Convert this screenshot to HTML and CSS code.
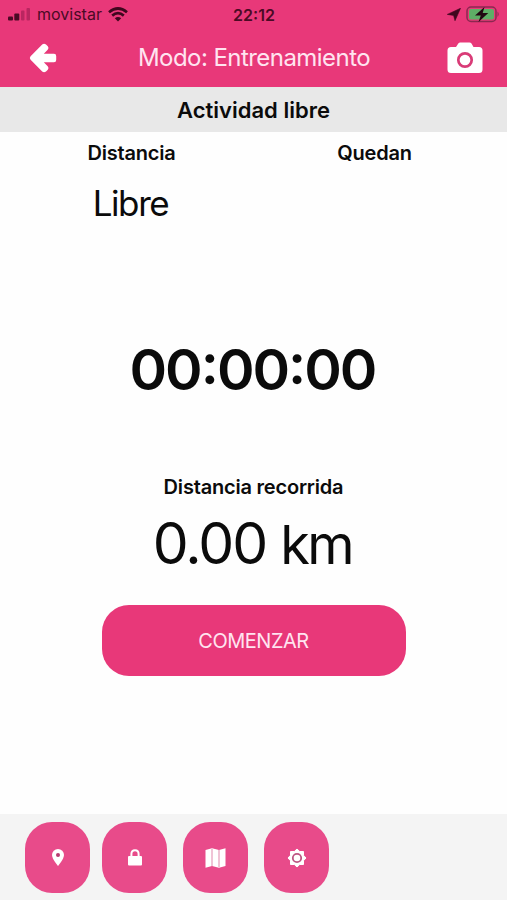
FILE: index.html
```html
<!DOCTYPE html>
<html lang="es">
<head>
  <meta charset="UTF-8" />
  <meta name="viewport" content="width=device-width, initial-scale=1" />
  <title>Modo: Entrenamiento</title>
  <link rel="stylesheet" href="styles.css">
</head>
<body>
  <div class="app">
    <div class="status-bar">
      <div class="carrier">
        <svg width="23" height="13" viewBox="0 0 23 13">
          <rect x="0" y="8.5" width="5" height="4" rx="1" fill="#4b0a25" />
          <rect x="6.3" y="5.5" width="5" height="7" rx="1" fill="#4b0a25" />
          <rect x="13" y="2.5" width="3.5" height="10" rx="1" fill="#b92660" />
          <rect x="18.5" y="0" width="3.5" height="12.5" rx="1" fill="#b92660" />
        </svg>
        <span class="carrier-name">movistar</span>
        <svg width="20" height="15" viewBox="0 0 20 15" fill="none" stroke="#3f071e" stroke-width="2.7">
          <path d="M1 5.2Q10-2.2 19 5.2" />
          <path d="M4.2 8.6Q10 3.8 15.8 8.6" />
          <path d="M10 14.6L6.8 11.3Q10 8.8 13.2 11.3Z" fill="#3f071e" stroke="none" />
        </svg>
      </div>
      <span class="clock">22:12</span>
      <div class="indicators">
        <svg width="14" height="13" viewBox="0 0 14 13">
          <path d="M13.5 .3L8 12.7L6.6 7.4L.3 6.4Z" fill="#3f071e" stroke="#3f071e" stroke-width=".6" />
        </svg>
        <svg width="34" height="17" viewBox="0 0 34 17">
          <rect x="1" y="1" width="29" height="14.5" rx="4" fill="none" stroke="#8b2850" stroke-width="1.5" />
          <rect x="3" y="3" width="25" height="10.5" rx="2" fill="#5eae66" />
          <path d="M31.5 5.5Q34 8 31.5 11Z" fill="#8b2850" />
          <path d="M18.5 1L9 9.4H14.8L12.5 16L22.3 7H16.7Z" fill="#210611" />
        </svg>
      </div>
    </div>

    <header class="header">
      <button class="icon-btn" aria-label="Volver">
        <svg width="28" height="30" viewBox="0 0 28 30">
          <path d="M1.6 13.2L13.2 1.6Q15 0 17 1.6L18.8 3.3Q20.3 5 18.7 6.8L14.8 10.7H25Q27.2 10.7 27.2 13V17Q27.2 19.3 25 19.3H14.8L18.7 23.2Q20.3 25 18.8 26.7L17 28.4Q15 30 13.2 28.4L1.6 16.8Q0 15 1.6 13.2Z" fill="#fff" />
        </svg>
      </button>
      <h1>Modo: Entrenamiento</h1>
      <button class="icon-btn" aria-label="Cámara">
        <svg width="36" height="32" viewBox="0 0 36 32">
          <path d="M4 5H9L11.3 1.5Q12 .5 13.2 .5H22.5Q23.8 .5 24.5 1.5L26.5 5H32Q35.5 5 35.5 8.5V27.5Q35.5 31 32 31H4Q.5 31 .5 27.5V8.5Q.5 5 4 5Z" fill="#fff" />
          <circle cx="18" cy="18" r="6.7" fill="none" stroke="#d93b77" stroke-width="2.7" />
        </svg>
      </button>
    </header>

    <h2 class="activity">Actividad libre</h2>

    <main>
      <div class="goals">
        <div class="goal">
          <div class="label">Distancia</div>
          <div class="goal-value">Libre</div>
        </div>
        <div class="goal">
          <div class="label">Quedan</div>
        </div>
      </div>

      <div class="timer">00:00:00</div>

      <div class="label">Distancia recorrida</div>
      <div class="distance">0.00 <span class="unit">km</span></div>

      <button class="start-btn">COMENZAR</button>
    </main>

    <nav class="toolbar">
      <button class="tool" aria-label="Ubicación">
        <svg width="12" height="17" viewBox="0 0 12 17">
          <path d="M6 0A6 6 0 0 0 0 6C0 10 6 17 6 17S12 10 12 6A6 6 0 0 0 6 0Z" fill="#fff" />
          <circle cx="6" cy="6" r="2" fill="#b83a70" />
        </svg>
      </button>
      <button class="tool" aria-label="Bloquear">
        <svg width="14" height="17" viewBox="0 0 14 17">
          <path d="M3.4 8V5Q3.4 1.2 7 1.2T10.6 5V8" fill="none" stroke="#fff" stroke-width="2" />
          <rect x="0" y="7" width="14" height="9.5" rx="1" fill="#fff" />
        </svg>
      </button>
      <button class="tool" aria-label="Mapa">
        <svg width="21" height="20" viewBox="0 0 21 20">
          <path d="M.5 2L7 .3L14 2L20.5 .3V18L14 19.7L7 18L.5 19.7Z" fill="#fff" />
          <path d="M7 1V18M14 2V19" stroke="#e8a5c1" stroke-width="1.3" />
        </svg>
      </button>
      <button class="tool" aria-label="Ajustes">
        <svg width="20" height="20" viewBox="0 0 20 20">
          <path d="M10 1L12.7 3.5H16.5V7.3L19 10L16.5 12.7V16.5H12.7L10 19L7.3 16.5H3.5V12.7L1 10L3.5 7.3V3.5H7.3Z" fill="#fff" stroke="#fff" stroke-linejoin="round" />
          <circle cx="10" cy="10" r="4.2" fill="none" stroke="#bd5583" stroke-width="1.8" />
        </svg>
      </button>
    </nav>
  </div>
</body>
</html>
```
FILE: styles.css
```css
* {
  box-sizing: border-box;
}
body {
  margin: 0;
  font-family: Inter, "Liberation Sans", sans-serif;
  background-color: #fefefe;
  color: #0b0b0b;
}
h1, h2 {
  margin: 0;
}
button {
  border: none;
  padding: 0;
  color: #fff;
  font-family: inherit;
  cursor: pointer;
}
svg {
  display: block;
}
.app {
  display: flex;
  flex-direction: column;
  height: 900px;
}
.status-bar {
  display: grid;
  grid-template-columns: 1fr auto 1fr;
  align-items: center;
  height: 30px;
  padding: 0 7px 1px 8px;
  background-color: #e83879;
  color: #4b0a25;
}
.carrier {
  display: flex;
  align-items: center;
  gap: 6px;
}
.carrier-name {
  font-size: 16px;
  line-height: 29px;
}
.clock {
  font-size: 16px;
  font-weight: 600;
}
.indicators {
  display: flex;
  justify-content: flex-end;
  align-items: center;
  gap: 5px;
}
.header {
  display: flex;
  justify-content: space-between;
  align-items: center;
  height: 57px;
  padding: 0 24px 2px 29px;
  background-color: #e83879;
}
.header h1 {
  padding-left: 4px;
  color: #ffe4f0;
  font-size: 24px;
  font-weight: 400;
  letter-spacing: -0.55px;
}
.icon-btn {
  background: none;
}
.activity {
  height: 45px;
  background-color: #e8e8e8;
  font-size: 22px;
  font-weight: 600;
  line-height: 47px;
  text-align: center;
}
main {
  flex: 1;
  text-align: center;
}
.goals {
  display: grid;
  grid-template-columns: 263px 223px;
  height: 204px;
  padding-top: 8px;
}
.label {
  font-size: 20px;
  font-weight: 600;
  line-height: 26px;
  letter-spacing: -0.2px;
}
.goal-value {
  margin-top: 14px;
  padding-right: 2px;
  font-size: 35px;
  line-height: 46px;
  letter-spacing: -1.4px;
}
.timer {
  height: 138px;
  padding-right: 2px;
  font-size: 57px;
  font-weight: 600;
  line-height: 68px;
  letter-spacing: -2px;
  font-feature-settings: "case";
}
.distance {
  height: 69px;
  margin: 9px 0 27px;
  padding-right: 2px;
  font-size: 57px;
  line-height: 69px;
  letter-spacing: -2px;
}
.unit {
  font-size: 54px;
  letter-spacing: -2.5px;
}
.start-btn {
  width: 304px;
  height: 71px;
  border-radius: 27px;
  background-color: #e83879;
  color: #ffe4f0;
  font-size: 20px;
  letter-spacing: -0.5px;
}
.toolbar {
  display: flex;
  gap: 16px;
  height: 86px;
  padding: 8px 25px;
  background-color: #f4f4f4;
}
.tool {
  display: flex;
  justify-content: center;
  align-items: center;
  width: 65px;
  height: 71px;
  border-radius: 27px;
  background-color: #e84b8a;
}
.tool:first-child {
  margin-right: -4px;
}
```
